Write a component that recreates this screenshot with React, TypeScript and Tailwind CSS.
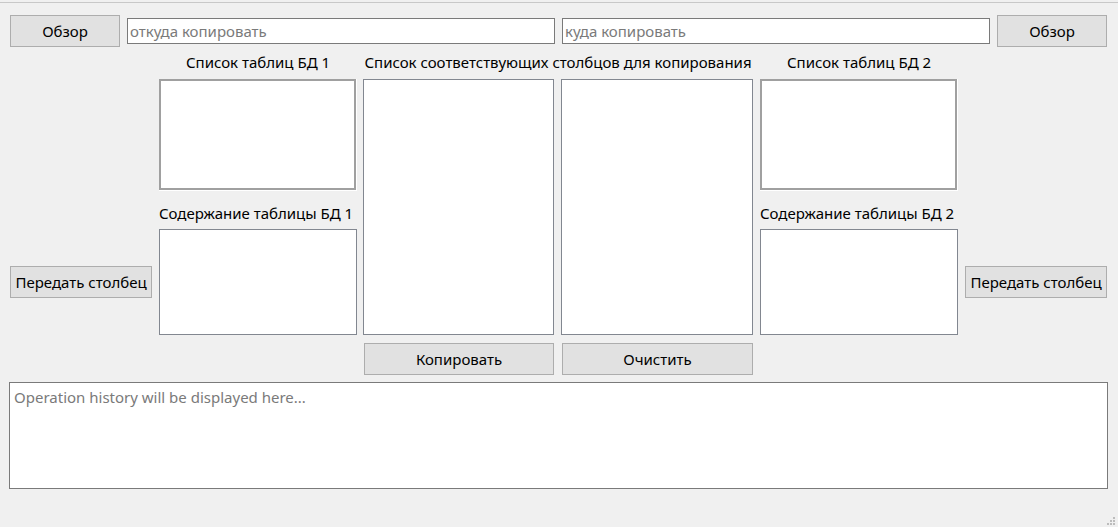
import React from 'react'

const font = { fontFamily: '"Noto Sans", "Segoe UI", sans-serif' }

function WinButton({ children, className = '' }: { children: React.ReactNode; className?: string }) {
  return (
    <button
      className={`h-[32px] border border-[#adadad] bg-[#e1e1e1] text-[15px] text-black leading-none ${className}`}
    >
      {children}
    </button>
  )
}

function SunkenList() {
  return (
    <div className="h-full border-r border-b border-white">
      <div className="h-full border-2 border-[#a0a0a0] bg-white" />
    </div>
  )
}

function PlainBox() {
  return <div className="h-full border border-[#828790] bg-white" />
}

export default function App() {
  return (
    <div className="relative h-[527px] w-[1118px] overflow-hidden bg-[#f0f0f0] text-black" style={font}>
      <div className="mt-[2px] border-t border-[#c8c8c8]" />

      {/* path row */}
      <div className="mt-[12px] flex items-center px-[10px]">
        <WinButton className="w-[110px]">Обзор</WinButton>
        <input
          placeholder="откуда копировать"
          className="ml-[7px] h-[26px] w-[428px] border border-[#7a7a7a] bg-white px-[2px] text-[15px] outline-none placeholder:text-[#7a7a7a]"
        />
        <input
          placeholder="куда копировать"
          className="ml-[7px] h-[26px] w-[428px] border border-[#7a7a7a] bg-white px-[2px] text-[15px] outline-none placeholder:text-[#7a7a7a]"
        />
        <WinButton className="ml-[7px] w-[110px]">Обзор</WinButton>
      </div>

      {/* main grid: spacer columns keep the uneven gaps */}
      <div className="grid grid-cols-[142px_7px_198px_6px_191px_7px_192px_7px_198px_7px_142px] grid-rows-[32px_112px_38px_106px] pl-[10px]">
        <div className="col-start-3 row-start-1 flex items-end justify-center pb-[7px] text-[15px] leading-[20px] whitespace-nowrap">
          Список таблиц БД 1
        </div>
        <div className="col-start-5 col-span-3 row-start-1 flex items-end justify-center pb-[7px] text-[15px] leading-[20px] whitespace-nowrap">
          Список соответствующих столбцов для копирования
        </div>
        <div className="col-start-9 row-start-1 flex items-end justify-center pb-[7px] text-[15px] leading-[20px] whitespace-nowrap">
          Список таблиц БД 2
        </div>

        <div className="col-start-3 row-start-2">
          <SunkenList />
        </div>
        <div className="col-start-5 row-start-2 row-span-3">
          <PlainBox />
        </div>
        <div className="col-start-7 row-start-2 row-span-3">
          <PlainBox />
        </div>
        <div className="col-start-9 row-start-2">
          <SunkenList />
        </div>

        <div className="col-start-3 row-start-3 flex items-end pb-[6px] text-[15px] leading-[20px] whitespace-nowrap">
          Содержание таблицы БД 1
        </div>
        <div className="col-start-9 row-start-3 flex items-end pb-[6px] text-[15px] leading-[20px] whitespace-nowrap">
          Содержание таблицы БД 2
        </div>

        <div className="col-start-1 row-start-4 flex items-center">
          <WinButton className="w-[142px]">Передать столбец</WinButton>
        </div>
        <div className="col-start-3 row-start-4">
          <PlainBox />
        </div>
        <div className="col-start-9 row-start-4">
          <PlainBox />
        </div>
        <div className="col-start-11 row-start-4 flex items-center">
          <WinButton className="w-[142px]">Передать столбец</WinButton>
        </div>
      </div>

      {/* action buttons */}
      <div className="mt-[8px] flex pl-[364px]">
        <WinButton className="w-[190px]">Копировать</WinButton>
        <WinButton className="ml-[8px] w-[191px]">Очистить</WinButton>
      </div>

      {/* history */}
      <div className="mt-[7px] px-[9px]">
        <textarea
          placeholder="Operation history will be displayed here..."
          className="block h-[107px] w-[1099px] resize-none border border-[#7a7a7a] bg-white px-[4px] py-[3px] text-[15px] outline-none placeholder:text-[#7a7a7a]"
        />
      </div>

      {/* size grip */}
      <svg className="absolute right-[2px] bottom-[1px]" width="10" height="10" viewBox="0 0 10 10">
        <rect x="7" y="1" width="2" height="2" fill="#bcbcbc" />
        <rect x="4" y="4" width="2" height="2" fill="#bcbcbc" />
        <rect x="7" y="4" width="2" height="2" fill="#bcbcbc" />
        <rect x="1" y="7" width="2" height="2" fill="#bcbcbc" />
        <rect x="4" y="7" width="2" height="2" fill="#bcbcbc" />
        <rect x="7" y="7" width="2" height="2" fill="#bcbcbc" />
      </svg>
    </div>
  )
}
